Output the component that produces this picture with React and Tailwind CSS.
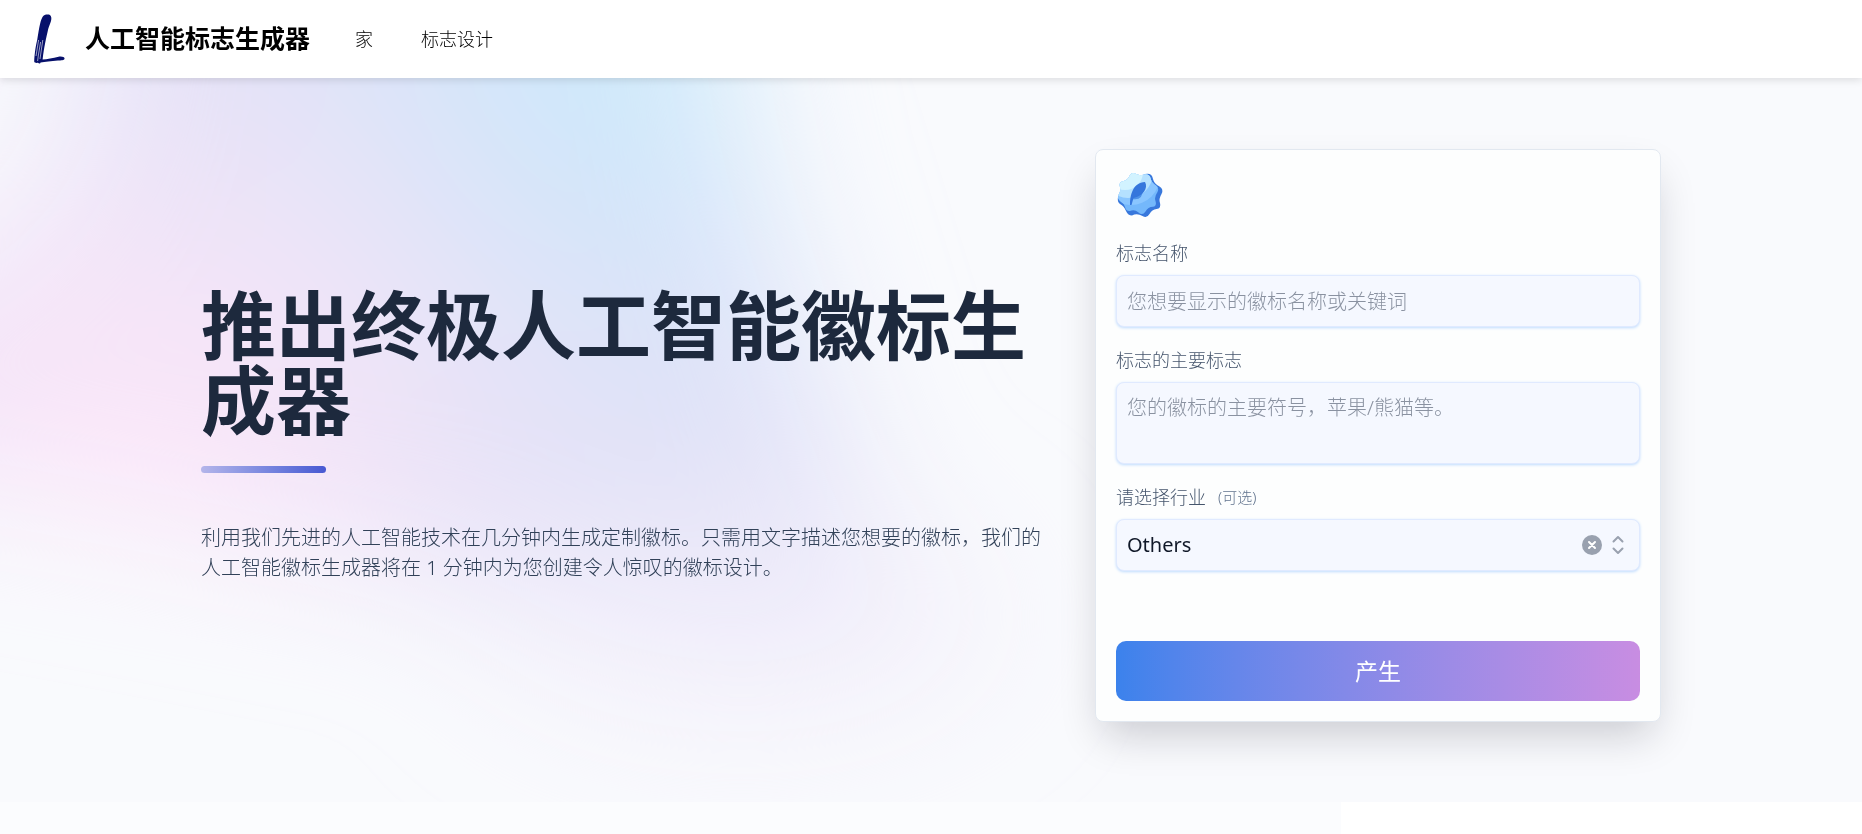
import { useState } from 'react'

const industries = ['Others', 'Technology', 'Education', 'Finance', 'Food', 'Health', 'Sports']

const fieldClass =
  'block w-full rounded-lg border border-[#e0eaff] bg-[#f5f8ff] px-[10px] text-[20px] leading-[30px] text-gray-900 shadow-[0_1px_3px_0_#bfdbfe] outline-none placeholder:font-light placeholder:text-[#8a92a1] focus:border-blue-300'

const labelClass = 'mb-[9px] flex h-[26px] items-center text-[18px] leading-[26px] font-light text-slate-600'

function Logo() {
  return (
    <svg className="h-[50px] w-[34px] shrink-0" viewBox="0 0 34 50" aria-hidden="true">
      <path
        d="M9.500 3C11 .4 14 .2 16 .6C18.400 1.400 18.800 4.500 18 7C17.200 10 16 12 15.200 15C13.200 24 11 33 9.600 45.600C14 45.600 20 44 25.500 42.800C28.500 42.200 31.800 43 31.600 44.800C31.200 46.600 28 46.400 25 46.600C18 47.200 12 48 7.500 48.400C7.500 49.600 6 50 5 48.800C3.500 49 1.400 49 1.200 47.600C1.400 42 2.400 33 4.200 26C5.600 18 6.800 7.500 9.500 3Z"
        fill="#07106b"
      />
      <path
        d="M5.600 26L3 42M7.600 28L5.400 41L4.600 47M9.800 26L8.600 34L7 45"
        stroke="#fff"
        strokeWidth=".6"
        fill="none"
      />
    </svg>
  )
}

function BadgeIcon() {
  return (
    <svg className="h-[50px] w-[50px]" viewBox="0 0 50 50" aria-hidden="true">
      <defs>
        <clipPath id="badge-face">
          <path d="M14 5Q16 1.500 20 4Q24 6 28 4.500Q33 3.500 34.500 8Q35.500 13 40 15.500Q43.500 18 41.500 22Q38 27 39.500 31Q41 36.500 37 36.800Q32 37 29.500 41.500Q26.500 46 22.500 42.500Q18.500 39 14 41Q10 41.500 9 37Q7.500 33 4 31Q1 28.500 2.500 25Q5 21 4 17Q2.500 12 7 11.300Q12 10.500 14 5Z" />
        </clipPath>
      </defs>
      <path
        d="M29 4Q36 2.500 37 9Q38 14 43.500 16.500Q48 19 45.500 24Q42.500 29 44 33Q45.500 38.500 40.500 39Q36 39.500 33.500 44Q31 48.500 26.500 46Q21 43 16 45.500Q12 45.500 10 41Q8 36 4 34Q1 32 2 27Z"
        fill="#3878dc"
      />
      <g clipPath="url(#badge-face)">
        <rect width="50" height="50" fill="#74b8fb" />
        <circle cx="15" cy="6" r="29" fill="#8ac6ff" />
        <circle cx="12" cy="3" r="25" fill="#b5e1ff" />
        <circle cx="9" cy="2" r="18" fill="#d2f3ff" />
      </g>
      <path d="M16 29Q27 31 26.500 20L20 20Z" fill="#4d91e8" />
      <path d="M14 35C14 25 17 12.500 29 12C32.500 18 27 26 17.500 28L15.500 35Z" fill="#3576dc" />
    </svg>
  )
}

function Backdrop() {
  return (
    <svg
      className="pointer-events-none absolute inset-0 h-full w-full"
      viewBox="0 0 1862 725"
      preserveAspectRatio="xMinYMin slice"
      aria-hidden="true"
    >
      <defs>
        <filter id="soft" filterUnits="userSpaceOnUse" x="-500" y="-600" width="2000" height="1800">
          <feGaussianBlur stdDeviation="72" />
        </filter>
        <radialGradient id="cyan" gradientUnits="userSpaceOnUse" cx="640" cy="-40" r="440">
          <stop offset="0" stopColor="#ccedfa" />
          <stop offset=".35" stopColor="#cfe6fa" stopOpacity=".85" />
          <stop offset="1" stopColor="#dbe6fa" stopOpacity="0" />
        </radialGradient>
        <radialGradient id="pink" gradientUnits="userSpaceOnUse" cx="120" cy="390" r="520">
          <stop offset="0" stopColor="#fde7f9" />
          <stop offset=".4" stopColor="#f8e5f8" stopOpacity=".8" />
          <stop offset="1" stopColor="#ece4f8" stopOpacity="0" />
        </radialGradient>
        <path
          id="blob"
          d="M100 -300L710 -300L740 40L820 300L900 540L760 580L480 510L180 450L-200 380L-200 250L10 150L80 40Z"
        />
      </defs>
      <g filter="url(#soft)">
        <use href="#blob" fill="#e1e1f7" />
        <use href="#blob" fill="url(#cyan)" />
        <use href="#blob" fill="url(#pink)" />
        <ellipse cx="740" cy="540" rx="260" ry="110" fill="#f3eefb" opacity=".65" />
      </g>
    </svg>
  )
}

function Header() {
  return (
    <header className="relative z-10 flex h-[78px] items-center bg-white px-[33px] shadow-[0_2px_8px_0_rgba(0,0,0,0.12)]">
      <a href="/" className="flex items-center gap-[18px] text-[25px] font-bold text-black">
        <Logo />
        人工智能标志生成器
      </a>
      <nav className="ml-[45px] flex items-center gap-12 text-[18px] font-light text-black">
        <a href="/">家</a>
        <a href="/design">标志设计</a>
      </nav>
    </header>
  )
}

function GeneratorForm() {
  const [industry, setIndustry] = useState('Others')

  return (
    <form
      className="w-[566px] max-w-full shrink-0 rounded-lg border border-slate-200 bg-[#fdfefe] p-5 shadow-[0_20px_40px_-8px_rgba(15,15,30,0.2)]"
      onSubmit={(e) => e.preventDefault()}
    >
      <BadgeIcon />
      <div className="mt-5">
        <label htmlFor="name" className={labelClass}>
          标志名称
        </label>
        <input id="name" type="text" placeholder="您想要显示的徽标名称或关键词" className={`${fieldClass} h-[52px]`} />
      </div>
      <div className="mt-5">
        <label htmlFor="symbol" className={labelClass}>
          标志的主要标志
        </label>
        <textarea
          id="symbol"
          placeholder="您的徽标的主要符号，苹果/熊猫等。"
          className={`${fieldClass} h-[82px] resize-none py-[10px]`}
        />
      </div>
      <div className="mt-5">
        <label htmlFor="industry" className={labelClass}>
          请选择行业
          <span className="ml-3 text-[15px] text-slate-500">(可选)</span>
        </label>
        <div className="relative">
          <select
            id="industry"
            value={industry}
            onChange={(e) => setIndustry(e.target.value)}
            className={`${fieldClass} h-[52px] appearance-none`}
          >
            <option value="" />
            {industries.map((item) => (
              <option key={item} value={item}>{item}</option>
            ))}
          </select>
          <button
            type="button"
            aria-label="清除"
            onClick={() => setIndustry('')}
            className="absolute inset-y-0 right-9 flex items-center text-gray-400"
          >
            <svg className="h-6 w-6" viewBox="0 0 24 24" aria-hidden="true">
              <circle cx="12" cy="12" r="10" fill="currentColor" />
              <path d="M9 9L15 15M15 9L9 15" stroke="#fff" strokeWidth="2" strokeLinecap="round" />
            </svg>
          </button>
          <svg
            className="pointer-events-none absolute inset-y-0 right-[10px] my-auto h-6 w-6 text-gray-400"
            viewBox="0 0 24 24"
            fill="none"
            stroke="currentColor"
            strokeWidth="2"
            strokeLinecap="round"
            strokeLinejoin="round"
            aria-hidden="true"
          >
            <path d="M7.500 8.500L12 4L16.500 8.500M16.500 15.500L12 20L7.500 15.500" />
          </svg>
        </div>
      </div>
      <button
        type="submit"
        className="mt-[70px] block h-[60px] w-full rounded-[10px] bg-linear-to-r from-[#3b82ec] to-[#c88de2] text-[23px] text-white"
      >
        产生
      </button>
    </form>
  )
}

export default function App() {
  return (
    <div className="min-h-screen bg-white font-['Noto_Sans','Noto_Sans_CJK_SC',sans-serif]">
      <Header />
      <main>
        <section className="relative overflow-hidden bg-[#f9fafd] px-6 pt-[71px] pb-20">
          <Backdrop />
          <div className="relative mx-auto flex max-w-[1460px] flex-col items-center gap-12 xl:flex-row">
            <div className="min-w-0 flex-1">
              <h1 className="text-[75px] leading-none font-bold text-slate-800">推出终极人工智能徽标生成器</h1>
              <div className="mt-7 h-[7px] w-[125px] rounded-full bg-linear-to-r from-[#b4b5ea] to-[#4858d2]" />
              <p className="mt-[50px] text-[20px] leading-[30px] font-light text-slate-700">
                利用我们先进的人工智能技术在几分钟内生成定制徽标。只需用文字描述您想要的徽标，我们的人工智能徽标生成器将在 1 分钟内为您创建令人惊叹的徽标设计。
              </p>
            </div>
            <GeneratorForm />
          </div>
        </section>
        <section className="h-8">
          <div className="h-full w-[72%] bg-[#fbfcfe]" />
        </section>
      </main>
    </div>
  )
}
